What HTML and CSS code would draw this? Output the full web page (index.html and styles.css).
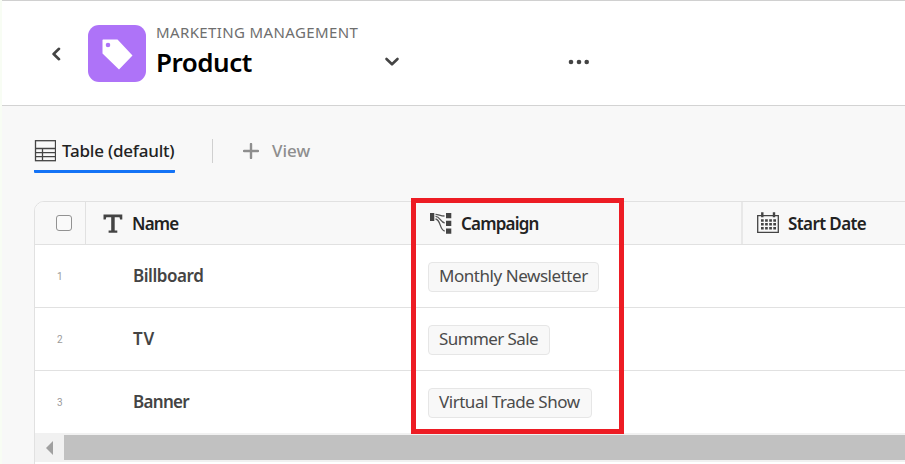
FILE: index.html
```html
<!DOCTYPE html>
<html lang="en">
<head>
<meta charset="utf-8">
<title>Product</title>
<link rel="stylesheet" href="styles.css">
</head>
<body>
<div class="app">
  <header class="header">
    <svg class="back" width="10" height="14" viewBox="0 0 10 14"><path d="M8 1.8 2.6 7 8 12.2"/></svg>
    <div class="logo">
      <svg width="58" height="57" viewBox="0 0 58 57"><path fill="#fff" fill-rule="evenodd" d="M15 14.5h14.5L44.5 30.500 31 44.500 14.500 28.500V15zM20 17.700a2.300 2.300 0 1 0 0 4.600 2.300 2.300 0 0 0 0-4.600z"/></svg>
    </div>
    <div class="titles">
      <div class="workspace"><span>MARKETING MANAGEMENT</span></div>
      <div class="title-row">
        <h1>Product</h1>
        <svg class="chevron" width="16" height="10" viewBox="0 0 16 10"><path d="M2.500 2 8 7.300 13.500 2"/></svg>
        <svg class="more" width="22" height="6" viewBox="0 0 22 6"><circle cx="3" cy="3" r="2.300"/><circle cx="11" cy="3" r="2.300"/><circle cx="18.700" cy="3" r="2.300"/></svg>
      </div>
    </div>
  </header>
  <nav class="tabs">
    <div class="tab">
      <svg width="22" height="22" viewBox="0 0 22 22" fill="none" stroke="#444" stroke-width="1.300"><rect x="1.500" y=".7" width="20" height="20"/><path d="M1.500 8.500H21.500M1.500 12.600H21.500M1.500 16.600H21.500M8.500 8.500V20.700"/></svg>
      <span class="tab-label">Table (default)</span>
    </div>
    <div class="divider"></div>
    <div class="add-view">
      <svg width="16" height="16" viewBox="0 0 16 16"><path d="M8 1v14M1 8h14"/></svg>
      <span class="view-label">View</span>
    </div>
  </nav>
  <main class="table">
    <div class="row head">
      <div class="cell select"><span class="checkbox"></span></div>
      <div class="cell name">
        <svg width="20" height="19" viewBox="0 0 20 19"><path fill="#444" d="M.5.500h18.800v5h-2.200l-.6-2.200h-4.800v13.200h2.600v2.200H5.600v-2.200h2.600V3.300H3.300L2.700 5.500H.5z"/></svg>
        <span class="t-name">Name</span>
      </div>
      <div class="cell campaign">
        <svg width="22" height="22" viewBox="0 0 22 22"><path fill="#444" d="M0 1h4.300v8H0zM16 1h5.300v5.200H16zM16 8.700h5.300v5.200H16zM16 16.500h5.300v5.200H16z"/><path fill="none" stroke="#555" stroke-width="1.300" d="M5.500 2.300C9 2.300 10 4 14.500 4M5.500 4.300C10 4 10.500 10.500 14.700 10.800M5.500 7C11 7.500 9.500 18.500 14.700 19"/></svg>
        <span class="t-campaign">Campaign</span>
      </div>
      <div class="cell date">
        <svg width="22" height="22" viewBox="0 0 22 22"><path fill="none" stroke="#444" stroke-width="1.300" d="M.7 3.700h20.600v16.600H.7z"/><path stroke="#444" stroke-width="2.400" d="M5.300.3v5M17 .3v5"/><path stroke="#444" stroke-width="2.500" stroke-dasharray="2.700 1.400" d="M4 8.400h15M4 12.300h15M4 16.200h15"/></svg>
        <span class="t-date">Start Date</span>
      </div>
    </div>
    <div class="row">
      <div class="cell index">1</div><div class="cell value"><span class="v1">Billboard</span></div>
      <div class="cell link"><span class="chip chip1"><span>Monthly Newsletter</span></span></div>
    </div>
    <div class="row">
      <div class="cell index">2</div><div class="cell value"><span class="v2">TV</span></div>
      <div class="cell link"><span class="chip chip2"><span>Summer Sale</span></span></div>
    </div>
    <div class="row last">
      <div class="cell index">3</div><div class="cell value"><span class="v3">Banner</span></div>
      <div class="cell link"><span class="chip chip3"><span>Virtual Trade Show</span></span></div>
    </div>
    <div class="scrollbar">
      <svg class="arrow" width="7" height="14" viewBox="0 0 7 14"><path fill="#a0a0a0" d="M7 0v14L0 7z"/></svg>
      <div class="thumb"></div>
    </div>
  </main>
  <div class="highlight"></div>
</div>
</body>
</html>
```

FILE: styles.css
```css
* { box-sizing: border-box; }
body {
  margin: 0;
  background: #f8fdf4;
  font-family: "Noto Sans", "Open Sans", sans-serif;
  overflow: hidden;
}
svg { display: block; flex: none; }
span, h1 { white-space: nowrap; }
.app {
  position: relative;
  height: 464px;
  margin-left: 2px;
  background: #f8f8f8;
  overflow: hidden;
}
.header {
  display: flex;
  align-items: flex-start;
  height: 106px;
  background: #fff;
  border-top: 1px solid #d0d0d0;
  border-bottom: 1px solid #d3d3d3;
}
.back { margin: 46px 0 0 49px; }
.back path, .chevron path {
  fill: none;
  stroke: #444;
  stroke-width: 2.6;
  stroke-linecap: round;
  stroke-linejoin: round;
}
.logo {
  width: 58px;
  height: 57px;
  margin: 24px 0 0 27px;
  border-radius: 11px;
  background: #ae73f8;
}
.titles { margin: 20px 0 0 10px; }
.workspace {
  height: 23px;
  font-size: 15px;
  line-height: 22px;
  letter-spacing: 0.38px;
  color: #6e6e6e;
}
.title-row { display: flex; align-items: center; height: 36px; }
h1 {
  width: 228px;
  margin: 0;
  font-size: 26px;
  font-weight: 600;
  line-height: 36px;
  letter-spacing: -0.5px;
  color: #000;
}
.more { margin-left: 168px; fill: #444; }
.tabs { display: flex; height: 95px; padding: 32px 0 0 32px; }
.tab {
  display: flex;
  align-items: center;
  gap: 6px;
  width: 141px;
  height: 35px;
  padding-bottom: 4px;
  border-bottom: 3px solid #1473f6;
  border-radius: 1px;
  font-size: 17px;
  font-weight: 500;
  letter-spacing: -0.22px;
  color: #222;
}
.tab svg { margin-top: -2px; }
.tab-label { margin-top: -3px; }
.divider { width: 1px; height: 24px; margin: 1px 30px 0 37px; background: #d0d0d0; }
.add-view {
  display: flex;
  align-items: center;
  gap: 13px;
  height: 26px;
  font-size: 17px;
  font-weight: 500;
  color: #8e8e8e;
}
.view-label { margin-top: -2px; }
.add-view path { stroke: #8e8e8e; stroke-width: 2.4; stroke-linecap: round; }
.table {
  width: 900px;
  height: 280px;
  margin-left: 32px;
  border: 1px solid #e1e1e1;
  border-radius: 10px 0 0 0;
  background: #fff;
  overflow: hidden;
}
.row { display: flex; height: 63px; border-bottom: 1px solid #e1e1e1; }
.row.head { height: 43px; background: #f8f8f8; font-size: 17px; font-weight: 600; color: #222; }
.row.last { height: 62px; border-bottom: 0; }
.cell { display: flex; align-items: center; }
.select { width: 51px; padding-left: 21px; border-right: 1px solid #e1e1e1; }
.checkbox { width: 16px; height: 16px; border: 1px solid #929292; border-radius: 3px; background: #fafafa; }
.name { width: 326px; padding-left: 17px; gap: 9px; border-right: 1px solid #e1e1e1; }
.campaign { width: 331px; padding-left: 18px; gap: 9px; border-right: 2px solid #e8e8e8; }
.date { padding-left: 14px; gap: 9px; }
.t-name { letter-spacing: -0.8px; }
.t-campaign { letter-spacing: -0.8px; }
.t-date { letter-spacing: -0.6px; }
.index { width: 98px; padding-left: 22px; font-family: Roboto, sans-serif; font-size: 10px; color: #9a9a9a; }
.value { width: 295px; padding-bottom: 1px; font-size: 17px; font-weight: 600; color: #444; }
.v1 { letter-spacing: -0.45px; }
.v2 { letter-spacing: 0.9px; }
.v3 { letter-spacing: -0.7px; }
.link { padding-top: 2px; }
.chip {
  height: 30px;
  padding-left: 10px;
  border: 1px solid #e6e6e6;
  border-radius: 4px;
  background: #f8f8f8;
  font-size: 17px;
  line-height: 26px;
  color: #4b4b4b;
}
.chip1 { width: 171px; letter-spacing: -0.45px; }
.chip2 { width: 122px; letter-spacing: -0.6px; }
.chip3 { width: 164px; letter-spacing: -0.47px; }
.scrollbar { display: flex; align-items: center; height: 29px; background: #f1f1f1; }
.arrow { margin: 0 11px; }
.thumb { flex: 1; height: 25px; background: #c1c1c1; }
.highlight {
  position: absolute;
  top: 198px;
  left: 409px;
  width: 213px;
  height: 236px;
  border: 5px solid #ed1c24;
}
```
